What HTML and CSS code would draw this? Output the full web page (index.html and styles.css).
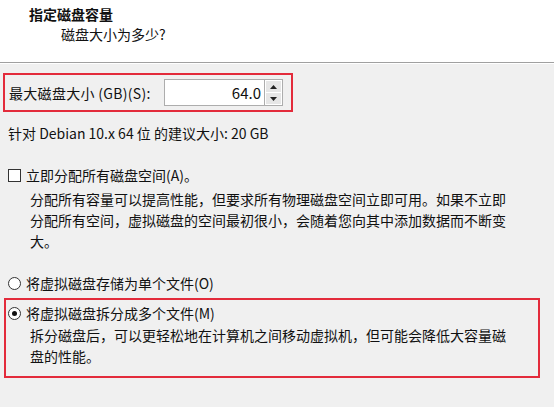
FILE: index.html
```html
<!DOCTYPE html>
<html lang="zh-CN">
<head>
<meta charset="utf-8">
<link rel="stylesheet" href="styles.css">
</head>
<body>
<div class="header">
  <div class="title">指定磁盘容量</div>
  <div class="subtitle">磁盘大小为多少?</div>
</div>
<div class="content">
  <div class="size-box">
    <span class="size-label">最大磁盘大小 (GB)(S):</span>
    <div class="spin">
      <div class="spin-input">64.0</div>
      <div class="spin-btns">
        <div class="spin-btn"><svg width="7" height="4" viewBox="0 0 7 4"><path d="M3.5 0 L7 4 L0 4 Z" fill="#222"/></svg></div>
        <div class="spin-btn"><svg width="7" height="4" viewBox="0 0 7 4"><path d="M0 0 L7 0 L3.5 4 Z" fill="#222"/></svg></div>
      </div>
    </div>
  </div>
  <div class="hint">针对 Debian 10.x 64 位 的建议大小: 20 GB</div>

  <div class="option check-row"><span class="checkbox"></span>立即分配所有磁盘空间(A)。</div>
  <div class="desc">分配所有容量可以提高性能，但要求所有物理磁盘空间立即可用。如果不立即<br>分配所有空间，虚拟磁盘的空间最初很小，会随着您向其中添加数据而不断变<br>大。</div>

  <div class="option radio-row"><span class="radio"></span>将虚拟磁盘存储为单个文件(O)</div>
  <div class="split-box">
    <div class="option radio-row sel"><span class="radio on"></span>将虚拟磁盘拆分成多个文件(M)</div>
    <div class="desc">拆分磁盘后，可以更轻松地在计算机之间移动虚拟机，但可能会降低大容量磁<br>盘的性能。</div>
  </div>
</div>
</body>
</html>
```
FILE: styles.css
```css
html, body {
  margin: 0;
  padding: 0;
}
body {
  width: 554px;
  height: 407px;
  background: #f0f0f0;
  font-family: "Noto Sans CJK SC", "Noto Sans", sans-serif;
  font-size: 14px;
  color: #111;
  overflow: hidden;
}
.header {
  background: #fff;
  height: 63px;
  border-bottom: 1px solid #a0a0a0;
  box-shadow: 0 1px 0 #fff;
  box-sizing: border-box;
  padding-top: 4px;
}
.title {
  padding-left: 29px;
  font-weight: bold;
  font-size: 14px;
  line-height: 20px;
}
.subtitle {
  padding-left: 61px;
  line-height: 20px;
}
.content {
  padding: 10px 0 0 3px;
}
.size-box {
  width: 290px;
  height: 39px;
  box-sizing: border-box;
  border: 2px solid #e32b3b;
  display: flex;
  align-items: center;
  padding-left: 4px;
}
.size-label {
  width: 155px;
  line-height: 20px;
  letter-spacing: 0.3px;
}
.spin {
  display: flex;
  align-items: stretch;
  height: 27px;
}
.spin-input {
  width: 100px;
  box-sizing: border-box;
  background: #fff;
  border: 1px solid #adadad;
  border-right: none;
  text-align: right;
  padding-right: 3px;
  line-height: 25px;
  font-size: 15px;
}
.spin-btns {
  width: 19px;
  display: flex;
  flex-direction: column;
  border: 1px solid #adadad;
  box-sizing: border-box;
  background: #fff;
  padding: 1px;
  gap: 1px;
}
.spin-btn {
  flex: 1;
  background: #e6e6e6;
  display: flex;
  align-items: center;
  justify-content: center;
}
.hint {
  padding-left: 5px;
  line-height: 20px;
  margin-top: 11px;
}
.option {
  display: flex;
  align-items: center;
  line-height: 20px;
  padding-left: 5px;
}
.check-row {
  margin-top: 22px;
}
.checkbox {
  width: 11px;
  height: 11px;
  border: 1px solid #333;
  background: #fff;
  margin-right: 5px;
}
.desc {
  padding-left: 27px;
  line-height: 21px;
  margin-top: 4px;
}
.radio-row {
  margin-top: 21px;
}
.radio {
  width: 11px;
  height: 11px;
  border: 1px solid #333;
  border-radius: 50%;
  background: #fff;
  margin-right: 5px;
  box-sizing: content-box;
  position: relative;
}
.radio.on::after {
  content: "";
  position: absolute;
  left: 3px;
  top: 3px;
  width: 5px;
  height: 5px;
  border-radius: 50%;
  background: #111;
}
.split-box {
  margin-top: 5px;
  margin-left: 1px;
  width: 536px;
  height: 80px;
  box-sizing: border-box;
  border: 2px solid #e32b3b;
  padding-top: 3px;
}
.split-box .option {
  margin-top: 0;
  padding-left: 2px;
}
.split-box .desc {
  padding-left: 24px;
  margin-top: 2px;
}
```
